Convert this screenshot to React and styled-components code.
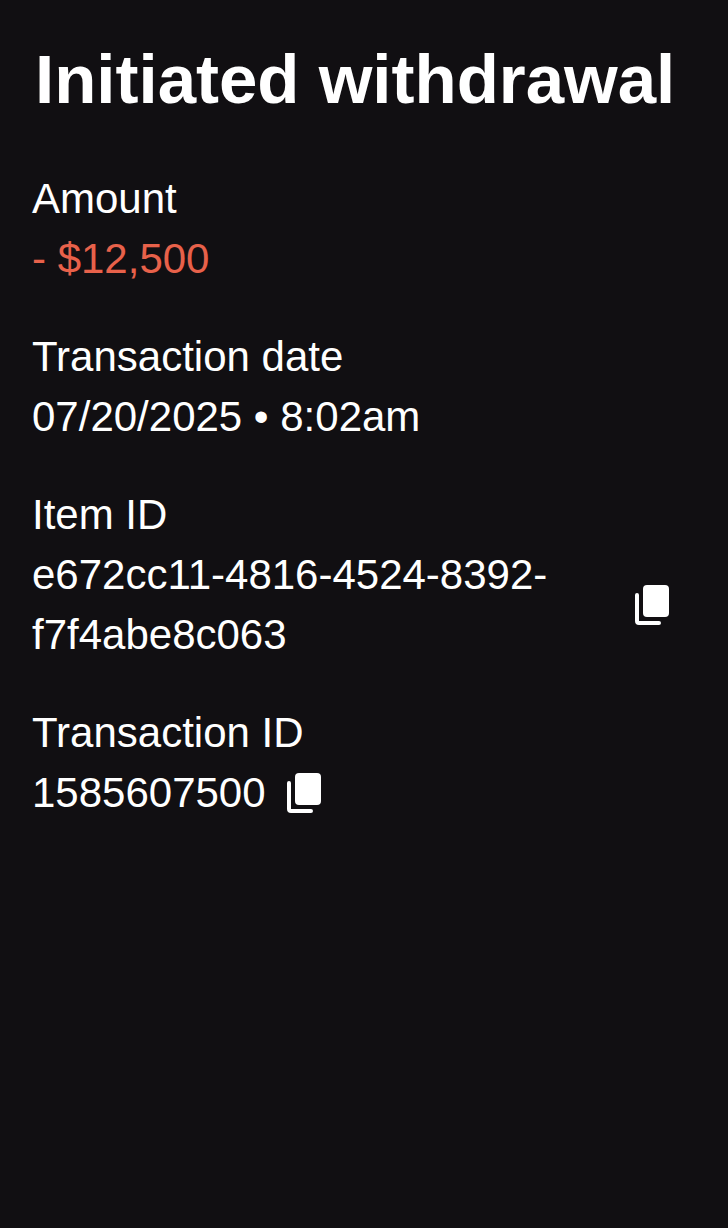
import styled, { createGlobalStyle } from 'styled-components'

const GlobalStyle = createGlobalStyle`
    * {
        box-sizing: border-box;
    }

    body {
        margin: 0;
        background: #110f12;
        color: #ffffff;
        font-family: 'Liberation Sans', Arial, sans-serif;
    }
`

const CopyIcon = () => (
    <svg width='36' height='42' viewBox='0 0 36 42' fill='none' aria-hidden='true'>
        <rect x='9' y='1' width='26' height='32' rx='4' fill='currentColor' />
        <path d='M3 11V37Q3 39 5 39H25' stroke='currentColor' strokeWidth='4' strokeLinecap='round' />
    </svg>
)

const details = [
    { label: 'Amount', value: '- $12,500', negative: true },
    { label: 'Transaction date', value: '07/20/2025 • 8:02am' },
    { label: 'Item ID', value: 'e672cc11-4816-4524-8392-f7f4abe8c063', copy: true },
    { label: 'Transaction ID', value: '1585607500', copy: true },
]

const App = () => {
    return (
        <Wrapper>
            <GlobalStyle />
            <Title>Initiated withdrawal</Title>
            <Details>
                {details.map(({ label, value, negative, copy }) => (
                    <div key={label}>
                        <Label>{label}</Label>
                        <Value $negative={negative}>
                            <span>{value}</span>
                            {copy && (
                                <CopyBtn type='button' aria-label={`Copy ${label}`}>
                                    <CopyIcon />
                                </CopyBtn>
                            )}
                        </Value>
                    </div>
                ))}
            </Details>
        </Wrapper>
    )
}

export default App

// styles
const Wrapper = styled.main`
    min-height: 100vh;
    padding: 40px 32px;
`

const Title = styled.h1`
    margin: 0 0 49px;
    padding-left: 3px;
    font-size: 69px;
    font-weight: 700;
    line-height: 80px;
`

const Details = styled.dl`
    display: flex;
    flex-direction: column;
    gap: 38px;
    margin: 0;
    padding-right: 26px;
    font-size: 42px;
    line-height: 60px;
`

const Label = styled.dt`
    margin: 0;
`

const Value = styled.dd`
    display: flex;
    align-items: center;
    gap: 20px;
    margin: 0;
    color: ${({ $negative }) => ($negative ? '#e8614a' : 'inherit')};
`

const CopyBtn = styled.button`
    display: flex;
    flex-shrink: 0;
    padding: 0;
    border: 0;
    background: none;
    color: inherit;
    cursor: pointer;
`
